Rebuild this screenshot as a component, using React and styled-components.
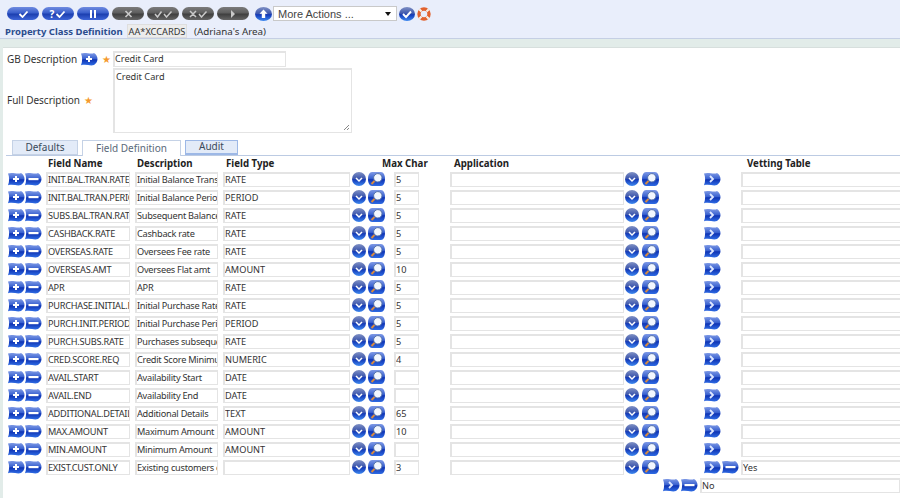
import React from 'react';
import styled, { createGlobalStyle } from 'styled-components';

const Global = createGlobalStyle`
  html, body { margin: 0; padding: 0; width: 900px; height: 498px; overflow: hidden; background: #fff; }
  body { font-family: "Noto Sans", "Liberation Sans", sans-serif; font-size: 10px; color: #333; }
  * { box-sizing: border-box; }
`;

const Page = styled.div`width: 900px; height: 498px; overflow: hidden; background: #e2ece9; display: flex; flex-direction: column;`;
const Header = styled.header`height: 39px; background: #e9eefb; border-bottom: 1px solid #c5cfe4; padding: 6px 0 0 7px; flex: none;`;
const Toolbar = styled.div`display: flex; align-items: center; height: 15px;`;
const Pill = styled.button`
  width: 32px; height: 13px; margin-right: 3px; padding: 0; border: 0; border-radius: 6.5px;
  display: flex; align-items: center; justify-content: center; color: ${p => (p.$off ? '#c9c9c9' : '#fff')};
  background: ${p => (p.$off
    ? 'linear-gradient(#7b7b7b 0%, #5e5e5e 45%, #3f3f3f 55%, #666 100%)'
    : 'linear-gradient(#6f8be0 0%, #3a5fcb 45%, #1c3fb0 55%, #3f66d8 100%)')};
`;
const PillText = styled.span`font: bold 10px "Noto Sans", sans-serif; line-height: 10px; margin-right: 1px;`;
const RoundSlot = styled.span`display: inline-flex; flex: none; margin-left: ${p => p.$ml || 0}px;`;
const ActionSelect = styled.div`
  width: 124px; height: 15px; margin-left: 1px; background: #fff; border: 1px solid #c9c9c9;
  display: flex; align-items: center; justify-content: space-between; padding: 0 5px 0 4px;
  font: 11px "Liberation Sans", sans-serif; color: #444;
`;
const Caret = styled.span`width: 0; height: 0; border: 3px solid transparent; border-top: 4px solid #111; border-bottom: 0;`;
const TitleRow = styled.div`display: flex; align-items: center; height: 16px; margin: 2px 0 0 -2px;`;
const Title = styled.span`font-weight: 700; color: #2c4d8e; font-size: 9.5px; width: 122px; white-space: nowrap;`;
const RecordId = styled.span`height: 14px; width: 60px; background: #ececec; border: 1px solid #dedede; display: flex; align-items: center; justify-content: center; color: #333; font-size: 9.2px;`;
const Area = styled.span`margin-left: 7px; color: #333; font-size: 9.8px;`;

const Panel = styled.main`flex: 1; margin: 8px 0 0 3px; background: #fff; border-top: 1px solid #d7dfdd; overflow: hidden; padding-top: 3px;`;
const FormGrid = styled.div`display: grid; grid-template-columns: 106px auto; row-gap: 1px; padding-left: 4px;`;
const FormLabel = styled.label`display: flex; align-items: center; gap: 4px; color: #333; white-space: nowrap; font-size: 10px; padding-bottom: ${p => p.$lift || 0}px;`;
const FlagSlot = styled.span`display: inline-flex;`;
const Star = styled.span`color: #f59a2c; font-size: 10px; line-height: 10px;`;
const Field = styled.div`
  height: ${p => p.$h || 15}px; width: ${p => p.$w}px; flex: none; background: #fff; border-style: solid; border-width: 2px 1px 1px 2px; border-color: #e4e4e4;
  color: #333; font-size: 9.2px; line-height: 11px; padding: 0; white-space: nowrap; overflow: hidden; position: relative;
  letter-spacing: ${p => (p.$tight ? '-0.25px' : '0')};
`;
const TextArea = styled(Field)`padding: 1px 0 0 1px;`;
const Grip = styled.svg`position: absolute; right: 1px; bottom: 1px;`;

const Tabs = styled.nav`display: flex; gap: 4px; margin: 7px 0 0 3px; padding-left: 6px; height: 16px; border-bottom: 1px solid #bccbe3; position: relative;`;
const Tab = styled.div`
  height: ${p => (p.$active ? 16 : 15)}px; width: ${p => p.$w}px; display: flex; align-items: center; justify-content: center; font-size: 10px; padding-bottom: 2px;
  background: ${p => (p.$active ? '#fff' : '#e3ebf8')}; color: ${p => (p.$active ? '#5a6a7a' : '#3a4a5a')};
  border: 1px solid ${p => (p.$strong ? '#9db8e6' : '#c5d2e6')}; ${p => (p.$active ? 'border-bottom: 0;' : '')}
  border-width: ${p => (p.$strong ? '1px 1px 2px' : '1px')};
`;
const columns = '5px 17px 18px 3px 84px 5px 83px 5px 127px 2px 14px 2px 17px 9px 25px 31px 174px 1px 14px 3px 17px 45px 17px 1px 17px 2px 160px';
const HeadRow = styled.div`display: grid; grid-template-columns: 45px 89px 89px 156px 72px 293px auto; height: 14px; align-items: center; font-weight: 700; color: #222; font-size: 9.7px; white-space: nowrap;`;
const HeadCell = styled.span``;
const Rows = styled.div`display: flex; flex-direction: column;`;
const Row = styled.div`display: grid; grid-template-columns: ${columns}; height: 18px; align-items: center;`;
const Cell = styled.div`grid-column: ${p => p.$c}; display: flex;`;
const LastRow = styled.div`display: flex; align-items: center; height: 18px; margin-left: 660px; gap: 1px;`;
const LastField = styled(Field)`margin-left: 1px;`;

const Check = () => <svg width="11" height="8" viewBox="0 0 11 8"><path d="M1.5 4l3 3 5-5.5" fill="none" stroke="currentColor" strokeWidth="1.8" /></svg>;
const DoubleCheck = () => <svg width="19" height="8" viewBox="0 0 19 8"><path d="M1 4l2.5 3 4-5.5M10 4l2.5 3 5-5.5" fill="none" stroke="currentColor" strokeWidth="1.5" /></svg>;
const Cross = () => <svg width="9" height="8" viewBox="0 0 9 8"><path d="M1.5 1l6 6M7.5 1l-6 6" stroke="currentColor" strokeWidth="1.7" /></svg>;
const CrossCheck = () => <svg width="19" height="8" viewBox="0 0 19 8"><path d="M1 1l6 6M7 1L1 7M10 4l2.5 3 5-5.5" fill="none" stroke="currentColor" strokeWidth="1.5" /></svg>;
const Pause = () => <svg width="8" height="8" viewBox="0 0 8 8"><path d="M1 0h2v8H1zM5 0h2v8H5z" fill="currentColor" /></svg>;
const Next = () => <svg width="6" height="8" viewBox="0 0 6 8"><path d="M1 0l4 4-4 4z" fill="currentColor" /></svg>;

const Defs = () => (
  <svg width="0" height="0" style={{ position: 'absolute' }}>
    <defs>
      <linearGradient id="blue" x1="0" y1="0" x2="0" y2="1">
        <stop offset="0" stopColor="#7f9ae6" /><stop offset=".45" stopColor="#3a62d0" />
        <stop offset=".55" stopColor="#0f34b4" /><stop offset="1" stopColor="#2f6ce4" />
      </linearGradient>
      <linearGradient id="round" x1="0" y1="0" x2="0" y2="1">
        <stop offset="0" stopColor="#7f90c4" /><stop offset=".48" stopColor="#3b55ad" />
        <stop offset=".55" stopColor="#1339b8" /><stop offset="1" stopColor="#3f8af0" />
      </linearGradient>
    </defs>
  </svg>
);

const Flag = ({ kind }) => (
  <svg width="17" height="14" viewBox="0 0 17 14" style={{ display: 'block' }}>
    <path d="M0 1.5C4 -0.2 10 2.6 13 1c2 1 3.5 3.5 3.5 6s-1.5 4.6-3.5 6c-4 1.3-8-1.2-13 .3C1.5 9.500 1.500 5 0 1.500z" fill="url(#blue)" />
    {kind === 'plus' && <path d="M7 4h2v2h2v2H9v2H7V8H5V6h2z" fill="#fff" />}
    {kind === 'minus' && <rect x="3.500" y="6" width="10" height="2.200" fill="#fff" />}
    {kind === 'next' && <path d="M6 4l3 3-3 3" fill="none" stroke="#dfe8ff" strokeWidth="1.800" />}
  </svg>
);
const RoundDown = () => (
  <svg width="14" height="14" viewBox="0 0 14 14" style={{ display: 'block' }}>
    <circle cx="7" cy="7" r="7" fill="url(#round)" />
    <path d="M4 6l3 3 3-3" fill="none" stroke="#fff" strokeWidth="1.500" />
  </svg>
);
const Lookup = () => (
  <svg width="17" height="14" viewBox="0 0 17 14" style={{ display: 'block' }}>
    <path d="M4 0h9c2.500 0 4 3 4 7s-1.500 7-4 7H4C1.500 14 0 11 0 7s1.500-7 4-7z" fill="url(#blue)" />
    <circle cx="9.800" cy="5.800" r="4.200" fill="#f2f7ff" stroke="#4f6ea8" strokeWidth="1" />
    <path d="M6.500 9L3.500 12" stroke="#d98a3d" strokeWidth="2" />
  </svg>
);
const RoundUp = () => (
  <svg width="17" height="14" viewBox="0 0 17 14" style={{ display: 'block' }}>
    <ellipse cx="8.500" cy="7" rx="8.500" ry="7" fill="url(#round)" />
    <path d="M8.500 2.500l4 4.200h-2.300V11H6.800V6.700H4.500z" fill="#fff" />
  </svg>
);
const RoundCheck = () => (
  <svg width="16" height="14" viewBox="0 0 16 14" style={{ display: 'block' }}>
    <ellipse cx="8" cy="7" rx="8" ry="7" fill="url(#round)" />
    <path d="M4 7l3 3 5-5.500" fill="none" stroke="#fff" strokeWidth="1.900" />
  </svg>
);
const Lifesaver = () => (
  <svg width="14" height="14" viewBox="0 0 14 14" style={{ display: 'block' }}>
    <circle cx="7" cy="7" r="5" fill="none" stroke="#e2622e" strokeWidth="3.400" />
    <path d="M2.200 2.200l2.300 2.300M11.800 2.200L9.500 4.500M2.200 11.800l2.300-2.300M11.800 11.800L9.500 9.500" stroke="#f6efe6" strokeWidth="2.200" />
  </svg>
);

const rows = [
  ['INIT.BAL.TRAN.RATE', 'Initial Balance Transfer', 'RATE', '5'],
  ['INIT.BAL.TRAN.PERIOD', 'Initial Balance Period', 'PERIOD', '5'],
  ['SUBS.BAL.TRAN.RATE', 'Subsequent Balance', 'RATE', '5'],
  ['CASHBACK.RATE', 'Cashback rate', 'RATE', '5'],
  ['OVERSEAS.RATE', 'Oversees Fee rate', 'RATE', '5'],
  ['OVERSEAS.AMT', 'Oversees Flat amt', 'AMOUNT', '10'],
  ['APR', 'APR', 'RATE', '5'],
  ['PURCHASE.INITIAL.RATE', 'Initial Purchase Rate', 'RATE', '5'],
  ['PURCH.INIT.PERIOD', 'Initial Purchase Period', 'PERIOD', '5'],
  ['PURCH.SUBS.RATE', 'Purchases subsequent', 'RATE', '5'],
  ['CRED.SCORE.REQ', 'Credit Score Minimum', 'NUMERIC', '4'],
  ['AVAIL.START', 'Availability Start', 'DATE', ''],
  ['AVAIL.END', 'Availability End', 'DATE', ''],
  ['ADDITIONAL.DETAILS', 'Additional Details', 'TEXT', '65'],
  ['MAX.AMOUNT', 'Maximum Amount', 'AMOUNT', '10'],
  ['MIN.AMOUNT', 'Minimum Amount', 'AMOUNT', ''],
  ['EXIST.CUST.ONLY', 'Existing customers only', '', '3', 'Yes'],
];

const TableRow = ({ r }) => (
  <Row>
    <Cell $c={2}><Flag kind="plus" /></Cell>
    <Cell $c={3}><FlagSlot><Flag kind="minus" /></FlagSlot></Cell>
    <Cell $c={5}><Field $w={84} $tight>{r[0]}</Field></Cell>
    <Cell $c={7}><Field $w={83} $tight>{r[1]}</Field></Cell>
    <Cell $c={9}><Field $w={127}>{r[2]}</Field></Cell>
    <Cell $c={11}><RoundDown /></Cell>
    <Cell $c={13}><Lookup /></Cell>
    <Cell $c={15}><Field $w={25}>{r[3]}</Field></Cell>
    <Cell $c={17}><Field $w={174} /></Cell>
    <Cell $c={19}><RoundDown /></Cell>
    <Cell $c={21}><Lookup /></Cell>
    <Cell $c={23}><Flag kind="next" /></Cell>
    {r[4] && <Cell $c={25}><Flag kind="minus" /></Cell>}
    <Cell $c={27}><Field $w={160}>{r[4] || ''}</Field></Cell>
  </Row>
);

export default function App() {
  return (
    <Page>
      <Global />
      <Defs />
      <Header>
        <Toolbar>
          <Pill><Check /></Pill>
          <Pill><PillText>?</PillText><Check /></Pill>
          <Pill><Pause /></Pill>
          <Pill $off><Cross /></Pill>
          <Pill $off><DoubleCheck /></Pill>
          <Pill $off><CrossCheck /></Pill>
          <Pill $off><Next /></Pill>
          <RoundSlot $ml={3}><RoundUp /></RoundSlot>
          <ActionSelect>More Actions ...<Caret /></ActionSelect>
          <RoundSlot $ml={2}><RoundCheck /></RoundSlot>
          <RoundSlot $ml={2}><Lifesaver /></RoundSlot>
        </Toolbar>
        <TitleRow>
          <Title>Property Class Definition</Title>
          <RecordId>AA*XCCARDS</RecordId>
          <Area>(Adriana's Area)</Area>
        </TitleRow>
      </Header>
      <Panel>
        <FormGrid>
          <FormLabel>GB Description<FlagSlot><Flag kind="plus" /></FlagSlot><Star>★</Star></FormLabel>
          <Field $w={173} $h={16}>Credit Card</Field>
          <FormLabel $lift={2}>Full Description<Star>★</Star></FormLabel>
          <TextArea $w={239} $h={65}>
            Credit Card
            <Grip width="7" height="7" viewBox="0 0 7 7"><path d="M6 1L1 6M6 4L4 6" stroke="#888" /></Grip>
          </TextArea>
        </FormGrid>
        <Tabs>
          <Tab $w={66}>Defaults</Tab>
          <Tab $w={99} $active>Field Definition</Tab>
          <Tab $w={53} $strong>Audit</Tab>
        </Tabs>
        <HeadRow>
          <HeadCell />
          <HeadCell>Field Name</HeadCell>
          <HeadCell>Description</HeadCell>
          <HeadCell>Field Type</HeadCell>
          <HeadCell>Max Char</HeadCell>
          <HeadCell>Application</HeadCell>
          <HeadCell>Vetting Table</HeadCell>
        </HeadRow>
        <Rows>
          {rows.map(r => <TableRow key={r[0]} r={r} />)}
          <LastRow>
            <Flag kind="next" />
            <Flag kind="minus" />
            <LastField $w={200}>No</LastField>
          </LastRow>
        </Rows>
      </Panel>
    </Page>
  );
}
